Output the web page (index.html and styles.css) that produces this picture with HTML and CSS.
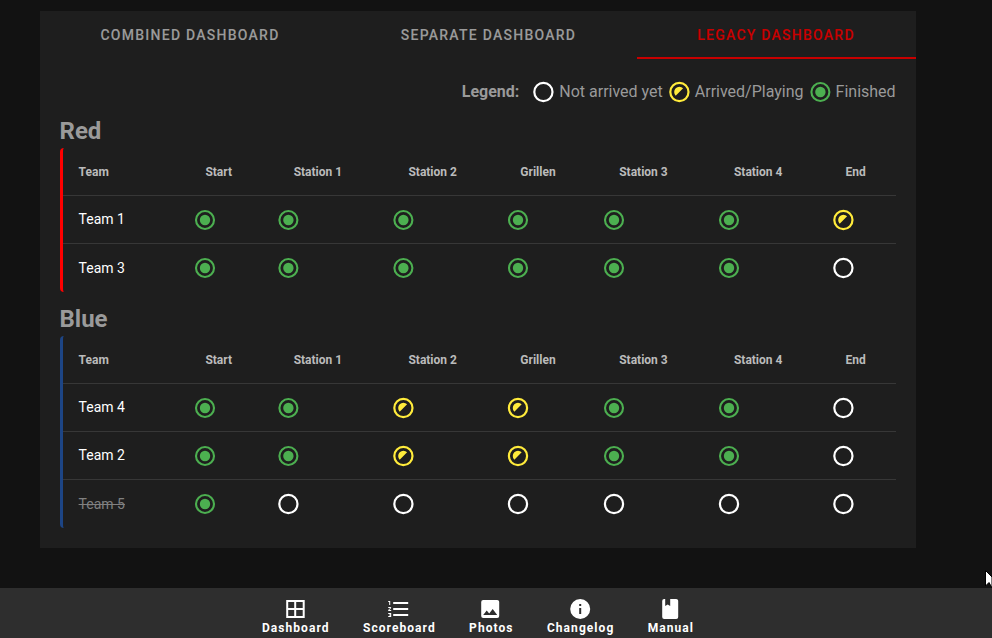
FILE: index.html
```html
<!DOCTYPE html>
<html lang="en">
<head>
<meta charset="utf-8">
<title>Dashboard</title>
<link rel="stylesheet" href="styles.css">
</head>
<body>
<svg class="defs" aria-hidden="true">
  <symbol id="none" viewBox="0 0 24 24"><circle cx="12" cy="12" r="9.100" fill="none" stroke="currentColor" stroke-width="2.200"/></symbol>
  <symbol id="playing" viewBox="0 0 24 24"><circle cx="12" cy="12" r="9.100" fill="none" stroke="currentColor" stroke-width="2.200"/><path fill="currentColor" d="M8.300 15.700A5.230 5.230 0 0 1 15.700 8.300Z"/></symbol>
  <symbol id="done" viewBox="0 0 24 24"><circle cx="12" cy="12" r="9" fill="none" stroke="currentColor" stroke-width="2.100"/><circle cx="12" cy="12" r="5.200" fill="currentColor"/></symbol>
</svg>
<main class="card">
  <nav class="tabs">
    <a class="tab">Combined Dashboard</a>
    <a class="tab">Separate Dashboard</a>
    <a class="tab active">Legacy Dashboard</a>
  </nav>
  <div class="content">
    <div class="legend">
      <b>Legend:</b>
      <svg class="icon none"><use href="#none"/></svg><span>Not arrived yet</span>
      <svg class="icon playing"><use href="#playing"/></svg><span>Arrived/Playing</span>
      <svg class="icon done"><use href="#done"/></svg><span>Finished</span>
    </div>
    <h2>Red</h2>
    <div class="table red">
      <div class="row head"><span>Team</span><span>Start</span><span>Station 1</span><span>Station 2</span><span>Grillen</span><span>Station 3</span><span>Station 4</span><span>End</span></div>
      <div class="row"><span>Team 1</span><svg class="icon done"><use href="#done"/></svg><svg class="icon done"><use href="#done"/></svg><svg class="icon done"><use href="#done"/></svg><svg class="icon done"><use href="#done"/></svg><svg class="icon done"><use href="#done"/></svg><svg class="icon done"><use href="#done"/></svg><svg class="icon playing"><use href="#playing"/></svg></div>
      <div class="row last"><span>Team 3</span><svg class="icon done"><use href="#done"/></svg><svg class="icon done"><use href="#done"/></svg><svg class="icon done"><use href="#done"/></svg><svg class="icon done"><use href="#done"/></svg><svg class="icon done"><use href="#done"/></svg><svg class="icon done"><use href="#done"/></svg><svg class="icon none"><use href="#none"/></svg></div>
    </div>
    <h2>Blue</h2>
    <div class="table blue">
      <div class="row head"><span>Team</span><span>Start</span><span>Station 1</span><span>Station 2</span><span>Grillen</span><span>Station 3</span><span>Station 4</span><span>End</span></div>
      <div class="row"><span>Team 4</span><svg class="icon done"><use href="#done"/></svg><svg class="icon done"><use href="#done"/></svg><svg class="icon playing"><use href="#playing"/></svg><svg class="icon playing"><use href="#playing"/></svg><svg class="icon done"><use href="#done"/></svg><svg class="icon done"><use href="#done"/></svg><svg class="icon none"><use href="#none"/></svg></div>
      <div class="row"><span>Team 2</span><svg class="icon done"><use href="#done"/></svg><svg class="icon done"><use href="#done"/></svg><svg class="icon playing"><use href="#playing"/></svg><svg class="icon playing"><use href="#playing"/></svg><svg class="icon done"><use href="#done"/></svg><svg class="icon done"><use href="#done"/></svg><svg class="icon none"><use href="#none"/></svg></div>
      <div class="row last"><span class="inactive">Team 5</span><svg class="icon done"><use href="#done"/></svg><svg class="icon none"><use href="#none"/></svg><svg class="icon none"><use href="#none"/></svg><svg class="icon none"><use href="#none"/></svg><svg class="icon none"><use href="#none"/></svg><svg class="icon none"><use href="#none"/></svg><svg class="icon none"><use href="#none"/></svg></div>
    </div>
  </div>
</main>
<nav class="bottom">
  <a><svg class="icon" viewBox="0 0 24 24"><path fill="currentColor" fill-rule="evenodd" d="M3 3H21.500V21H3ZM5 5V11H11V5ZM13 5V11H19.500V5ZM5 13V19H11V13ZM13 13V19H19.500V13Z"/></svg><span>Dashboard</span></a>
  <a><svg class="icon" viewBox="0 0 24 24"><path fill="currentColor" d="M7,13V11H22V13H7M7,19V17H22V19H7M7,7V5H22V7H7M3,8V5H2V4H4V8H3M2,17V16H5V20H2V19H4V18.5H3V17.5H4V17H2M4.25,10A0.75,0.75 0 0,1 5,10.75C5,10.95 4.92,11.14 4.79,11.27L3.12,13H5V14H2V13.08L4,11H2V10H4.25Z"/></svg><span>Scoreboard</span></a>
  <a><svg class="icon" viewBox="0 0 24 24"><path fill="currentColor" d="M8.5,13.5L11,16.5L14.5,12L19,18H5M21,19V5C21,3.89 20.1,3 19,3H5A2,2 0 0,0 3,5V19A2,2 0 0,0 5,21H19A2,2 0 0,0 21,19Z"/></svg><span>Photos</span></a>
  <a><svg class="icon" viewBox="0 0 24 24"><path fill="currentColor" d="M13,9H11V7H13M13,17H11V11H13M12,2A10,10 0 0,0 2,12A10,10 0 0,0 12,22A10,10 0 0,0 22,12A10,10 0 0,0 12,2Z"/></svg><span>Changelog</span></a>
  <a><svg class="icon" viewBox="0 0 24 24"><path fill="currentColor" d="M18,22A2,2 0 0,0 20,20V4C20,2.89 19.1,2 18,2H12V9L9.5,7.5L7,9V2H6A2,2 0 0,0 4,4V20A2,2 0 0,0 6,22H18Z"/></svg><span>Manual</span></a>
</nav>
<svg class="cursor" viewBox="0 0 7 18"><path d="M.5 .5V16L4 12.500L7 18V7Z" fill="#fff" stroke="#000"/></svg>
</body>
</html>
```
FILE: styles.css
```css
* { box-sizing: border-box; }
body {
  margin: 0;
  height: 638px;
  overflow: hidden;
  position: relative;
  display: flex;
  flex-direction: column;
  padding-top: 11px;
  background: #121212;
  color: #fff;
  font-family: Roboto, sans-serif;
}
.defs { position: absolute; width: 0; height: 0; }
.icon { display: block; width: 24px; height: 24px; flex: none; }
.none { color: #fff; }
.playing { color: #ffeb3b; }
.done { color: #4caf50; }
.card { width: 876px; height: 537px; margin-left: 40px; background: #1e1e1e; color: #9a9a9a; }
.tabs { display: grid; grid-template-columns: 299px 298px 279px; height: 48px; }
.tab {
  display: flex;
  align-items: center;
  justify-content: center;
  font-size: 14px;
  font-weight: 500;
  -webkit-text-stroke: .1px;
  letter-spacing: 1.25px;
  text-transform: uppercase;
  border-bottom: 2px solid transparent;
  padding: 2px 0 0 1px;
}
.tab.active { color: #c80000; border-color: #c80000; padding: 2px 1px 0 0; }
.content { padding: 20px; }
.legend { display: flex; justify-content: flex-end; align-items: center; height: 25px; padding-right: .4px; font-size: 16px; white-space: nowrap; }
.legend b { margin-right: 12px; }
.legend .icon { margin-right: 4px; }
.legend .icon { transform: translateX(.4px); }
.legend span + .icon { margin-left: 4px; }
h2 { margin: 0 0 0 -.5px; height: 44px; padding-top: 9px; font-size: 24px; line-height: 36px; font-weight: 700; }
.table { position: relative; border-left: 3px solid; border-radius: 4px; }
.red { border-color: #f00; }
.blue { border-color: #1d4585; }
.row {
  display: grid;
  grid-template-columns: 114px 83.400px 115px 114.600px 96px 115px 114.400px 80.600px;
  align-items: center;
  height: 48px;
  padding-top: 1px;
  border-bottom: 1px solid #373737;
  font-size: 14px;
  color: #fff;
}
.row.last { border-color: transparent; }
.row > span:first-child { padding-left: 15.600px; padding-bottom: 2px; text-align: left; }
.row.head > span:first-child, .row.last > span:first-child { padding-bottom: 0; }
.row > .icon { margin-left: 16px; }
.row > .icon:nth-child(3), .row > .icon:nth-child(4), .row > .icon:nth-child(8) { transform: translateX(.4px); }
.head { font-size: 12px; font-weight: 700; color: #bbb; text-align: center; }
.row .inactive { color: #808080; text-decoration: line-through; }
.bottom { display: flex; justify-content: center; gap: 33.300px; height: 50px; margin-top: 40px; padding: 9px 36px 0 0; background: #2e2e2e; }
.bottom a { display: flex; flex-direction: column; align-items: center; font-size: 12px; line-height: 14px; font-weight: 700; letter-spacing: 1.070px; }
.bottom .icon { transform: translateX(-.8px); }
.cursor { position: absolute; right: 0; top: 570px; width: 7px; height: 18px; }
```
